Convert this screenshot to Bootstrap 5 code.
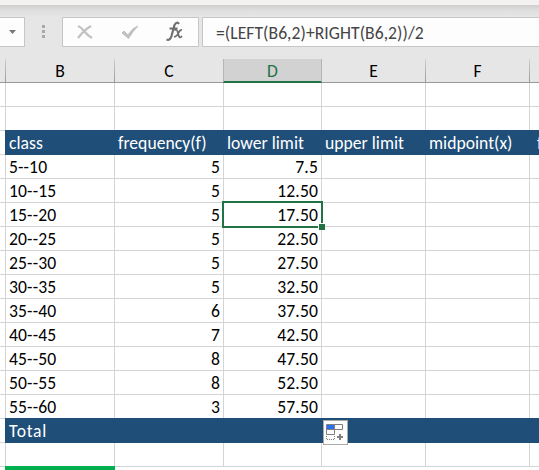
<!DOCTYPE html>
<html lang="en">
<head>
<meta charset="utf-8">
<title>Frequency table</title>
<meta name="viewport" content="width=device-width, initial-scale=1">
<link href="https://cdn.jsdelivr.net/npm/bootstrap@5.3.0/dist/css/bootstrap.min.css" rel="stylesheet">
<style>
body{font-family:Carlito,Calibri,Lato,sans-serif;font-size:17.6px;font-variant-ligatures:none;line-height:23px;color:#000;width:539px;height:470px;background:#fff}
.ribbon-edge{height:5px;background:#f3f2f1}
.formula-area{height:54px;padding-top:12px;background:linear-gradient(#cfcfcf,#dedede 5px,#e6e6e6 12px)}
.fbox{height:30px;background:#fdfdfd;border:1px solid #c6c6c6}
.name-box{width:25px;border-left:0;padding-left:9px}
.dots{width:37px;padding-left:17px}
.tools{width:137px;margin-right:3px}
.formula{border-right:0;padding-left:13px;line-height:30px;color:#444;letter-spacing:.06px}
.heads{height:24px;background:#e6e6e6;border-bottom:1px solid #999}
.head{height:23px;line-height:25px;text-align:center;padding-right:1px;background:linear-gradient(#cfcfcf,#999) right/1px 100% no-repeat}
.head.active{height:24px;background:#d2d2d2;color:#217346;border-bottom:2px solid #217346;border-right:1px solid #b5b5b5;margin-left:-1px;border-left:1px solid #b5b5b5;width:99px!important;padding:0}
.cell{height:24px;flex-shrink:0;border-right:1px solid #d4d4d4;border-bottom:1px solid #d4d4d4;padding:1px 3px 0;line-height:22px;white-space:nowrap;background:#fff;letter-spacing:.14px}
.c0{width:6px}.c1,.c2{width:109px}.c3{width:98px}.c4,.c5{width:104px}.c6{width:9px}
.cell.c0{padding:0}
.cell.c6{padding:1px 0 0 7px;border-right:0;overflow:hidden}
.band .cell:not(.c0){background:#1f4e78;border-color:#1f4e78;color:#fff;box-shadow:0 -1px #1f4e78,-1px 0 #1f4e78,-1px -1px #1f4e78;letter-spacing:.03px}
.band .cell.total{letter-spacing:.7px}
.num{text-align:right}
.selection{left:-2px;top:-2px;width:101px;height:27px;border:2px solid #217346;z-index:2}
.handle{right:-4px;bottom:-4px;width:7px;height:7px;background:#217346;border:solid #fff;border-width:1px 0 0 1px}
.fill-options{left:1px;top:1px;z-index:3}
.green-edge{margin-left:5px;margin-top:-1px;width:110px;height:4px;background:#00b050}
</style>
</head>
<body class="overflow-hidden">
<div class="ribbon-edge"></div>
<div class="formula-area d-flex">
  <div class="fbox name-box flex-shrink-0"><svg class="d-block" width="8" height="28"><path d="M0 12h7l-3.5 4z" fill="#777"/></svg></div>
  <div class="dots flex-shrink-0"><svg class="d-block" width="3" height="30"><path d="M0 8h3v3H0zm0 5h3v3H0zm0 5h3v3H0z" fill="#a9a9a9"/></svg></div>
  <div class="fbox tools flex-shrink-0">
    <svg class="d-block" width="135" height="28" fill="none">
      <path d="M15 8Q18 9 21 13Q25 18 29 20M28 8Q21 12 15 20" stroke="#c1c1c1" stroke-width="2.200"/>
      <path d="M59 15l2-2 4 4Q69 10 75 8Q70 13 65.500 20.500z" fill="#c1c1c1" stroke="#c1c1c1"/>
      <path d="M116 6Q114 3 111.500 7L108.500 18Q107 23 103.500 21.500M106.500 10.500h8" stroke="#707070" stroke-width="2.200"/>
      <path d="M111.500 12.500q2-2 3 1l1.500 5q1 2 3-.5M119 12q-2-.5-3.500 3t-4.500 4" stroke="#707070" stroke-width="1.700"/>
    </svg>
  </div>
  <div class="fbox formula flex-grow-1">=(LEFT(B6,2)+RIGHT(B6,2))/2</div>
</div>
<div class="heads d-flex">
  <div class="head c0"></div><div class="head c1">B</div><div class="head c2">C</div><div class="head c3 active">D</div><div class="head c4">E</div><div class="head c5">F</div>
</div>
<main id="sheet"></main>
<div class="green-edge position-relative"></div>
<script>
const rows = [
  [], [],
  ['class','frequency(f)','lower limit','upper limit','midpoint(x)','f'],
  ['5--10',5,'7.5'], ['10--15',5,'12.50'], ['15--20',5,'17.50'],
  ['20--25',5,'22.50'], ['25--30',5,'27.50'], ['30--35',5,'32.50'],
  ['35--40',6,'37.50'], ['40--45',7,'42.50'], ['45--50',8,'47.50'],
  ['50--55',8,'52.50'], ['55--60',3,'57.50'], ['Total'], []
];
const optionsIcon = `<svg class="fill-options position-absolute" width="25" height="25">
  <rect x=".5" y=".5" width="24" height="24" fill="#fdfdfd" stroke="#ababab"/>
  <path d="M3.5 4.5h16v5h-16zM11.5 4.5v5M3.5 9.5v5h8v-5" fill="none" stroke="#808080"/>
  <path d="M4 5h7v4H4z" fill="#2b70ee"/>
  <path d="M3.5 16v3.500h8V16" fill="none" stroke="#808080" stroke-dasharray="1 1"/>
  <path d="M14 17h6M17 14v6" stroke="#808080" stroke-width="2"/></svg>`;
document.getElementById('sheet').innerHTML = rows.map((r, y) => {
  const band = y === 2 || y === 14;
  let html = '<div class="d-flex' + (band ? ' band' : '') + '"><div class="cell c0"></div>';
  for (let x = 1; x < 7; x++) {
    const num = !band && (x === 2 || x === 3);
    let extra = '';
    if (y === 5 && x === 3) extra = '<span class="selection position-absolute"><span class="handle position-absolute"></span></span>';
    if (y === 14 && x === 4) extra = optionsIcon;
    html += `<div class="cell c${x}${num ? ' num' : ''}${y === 14 && x === 1 ? ' total' : ''}${extra ? ' position-relative' : ''}">${r[x - 1] ?? ''}${extra}</div>`;
  }
  return html + '</div>';
}).join('');
</script>
<script src="https://cdn.jsdelivr.net/npm/bootstrap@5.3.0/dist/js/bootstrap.bundle.min.js"></script>
</body>
</html>
